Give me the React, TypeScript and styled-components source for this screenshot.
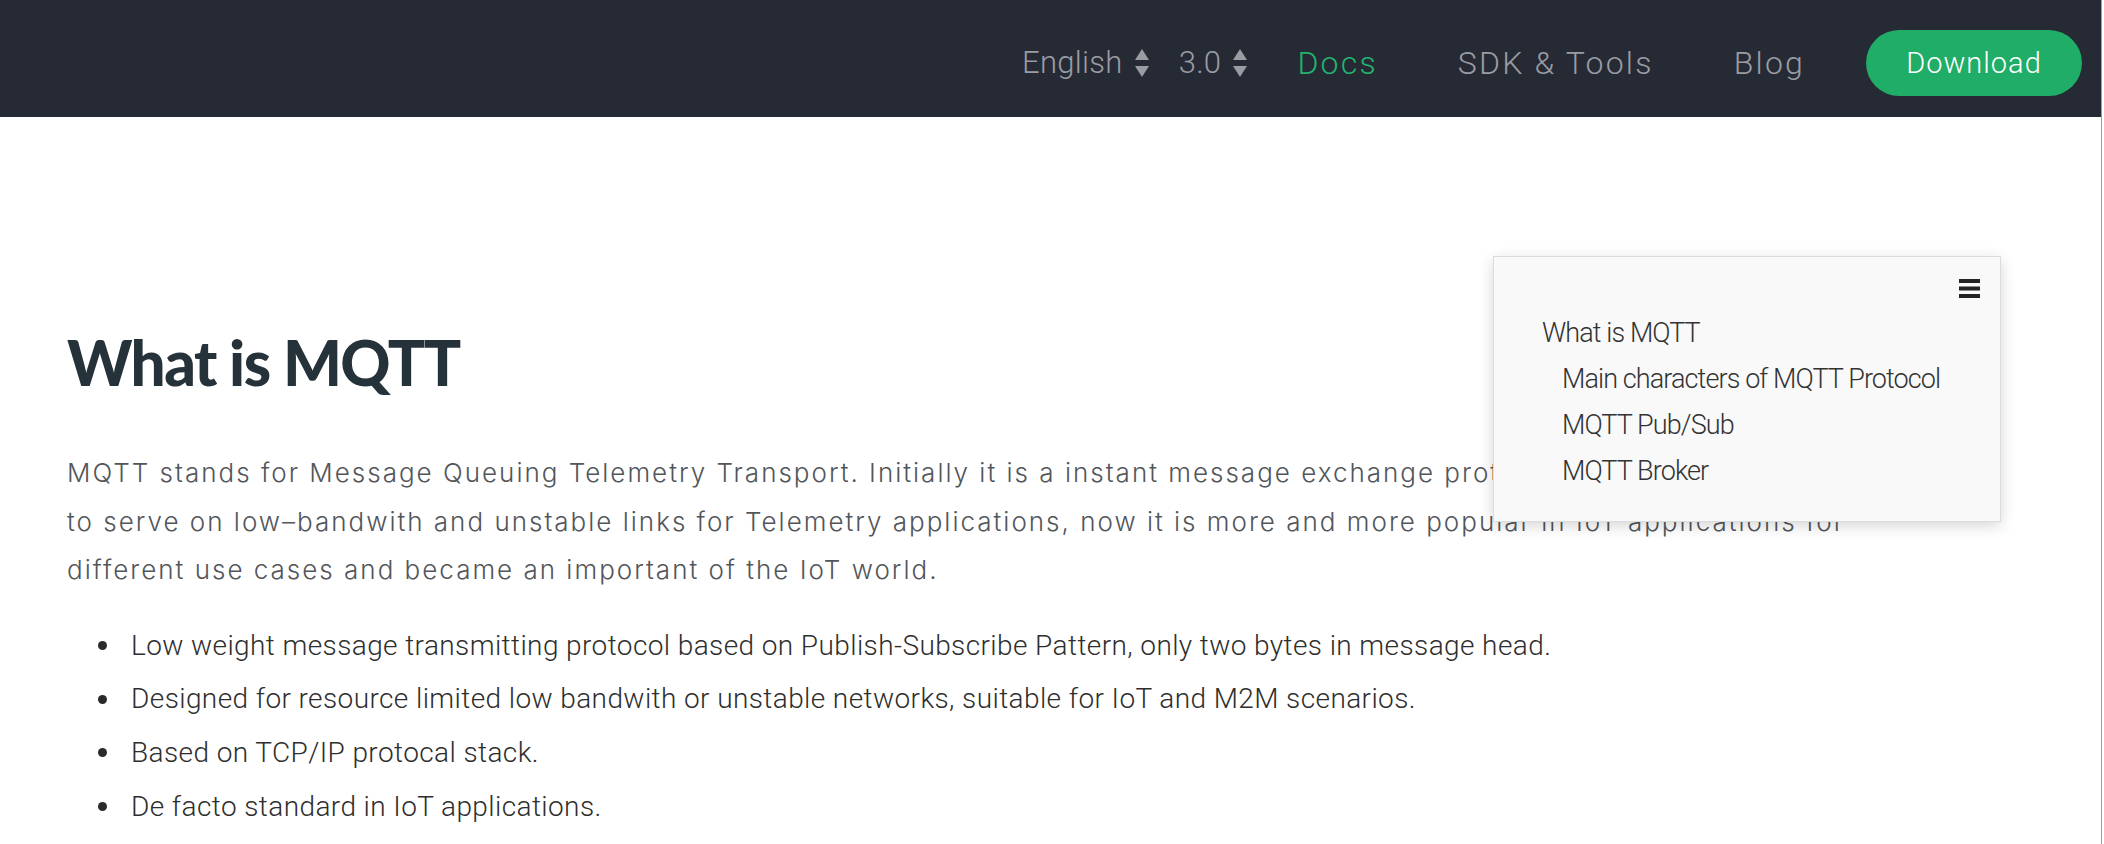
import React from "react";
import styled, { createGlobalStyle } from "styled-components";

const GlobalStyle = createGlobalStyle`
  html, body { margin: 0; padding: 0; background: #ffffff; }
  body { font-family: Roboto, "Liberation Sans", sans-serif; overflow: hidden; }
  * { box-sizing: border-box; }
`;

const Page = styled.div`
  position: relative;
  width: 2102px;
  min-height: 844px;
  border-right: 1px solid #9c9c9c;
  background: #ffffff;
`;

const NavBar = styled.header`
  height: 117px;
  background: #262a35;
  display: flex;
  align-items: center;
  justify-content: flex-end;
  padding: 8px 19px 0 0;
`;

const Selector = styled.div<{ $gap: number }>`
  display: flex;
  align-items: center;
  gap: 12px;
  margin-right: ${(p) => p.$gap}px;
  color: #9a9ca2;
  font-family: Roboto, sans-serif;
  font-weight: 300;
  font-size: 31px;
  letter-spacing: 0.3px;
`;

const NavLink = styled.a<{ $active?: boolean }>`
  color: ${(p) => (p.$active ? "#22b46e" : "#9a9ca2")};
  font-family: Roboto, sans-serif;
  font-weight: 300;
  font-size: 32px;
  letter-spacing: 2.2px;
  text-decoration: none;
  margin-right: 80px;
  &:last-of-type { margin-right: 61px; }
`;

const DownloadButton = styled.button`
  width: 216px;
  height: 66px;
  border-radius: 33px;
  border: none;
  background: #1fad68;
  color: #ffffff;
  font-family: Roboto, sans-serif;
  font-weight: 300;
  font-size: 29px;
  letter-spacing: 1px;
  display: flex;
  align-items: center;
  justify-content: center;
`;

const Main = styled.main`
  padding: 0 0 0 67px;
  width: 1860px;
`;

const Title = styled.h1`
  margin: 0;
  padding-top: 204px;
  font-family: Lato, Inter, sans-serif;
  font-weight: 900;
  font-size: 62px;
  line-height: 82px;
  letter-spacing: -1.5px;
  color: #263239;
`;

const Paragraph = styled.p`
  margin: 46px 0 0 0;
  font-family: Inter, "Noto Sans", sans-serif;
  font-weight: 300;
  font-size: 26px;
  line-height: 48.5px;
  letter-spacing: 2px;
  color: #52565b;
`;

const List = styled.ul`
  list-style: none;
  margin: 24px 0 0 0;
  padding: 0;
`;

const Item = styled.li`
  display: flex;
  align-items: center;
  font-family: Roboto, sans-serif;
  font-weight: 300;
  font-size: 28px;
  letter-spacing: 0.4px;
  line-height: 53.7px;
  color: #2e2e2e;
  &::before {
    content: "";
    flex: none;
    width: 9px;
    height: 9px;
    border-radius: 50%;
    background: #2a2a2a;
    margin: 0 24px 0 31px;
  }
`;

const Toc = styled.nav`
  position: absolute;
  top: 256px;
  left: 1493px;
  width: 508px;
  height: 266px;
  background: #f9f9f9;
  border: 1px solid #dcdcdc;
  box-shadow: 0 4px 14px rgba(0, 0, 0, 0.16);
  padding: 22px 20px 0 48px;
  display: flex;
  flex-direction: column;
`;

const TocHeader = styled.div`
  display: flex;
  justify-content: flex-end;
  height: 31px;
`;

const TocLink = styled.a<{ $level: number }>`
  display: block;
  padding-left: ${(p) => (p.$level - 1) * 20}px;
  font-family: Roboto, sans-serif;
  font-weight: 300;
  font-size: 27px;
  letter-spacing: -0.9px;
  line-height: 46px;
  color: #333333;
  text-decoration: none;
`;

const Arrows = () => (
  <svg width="14" height="28" viewBox="0 0 14 28" aria-hidden>
    <polygon points="7,0 14,11 0,11" fill="#9a9ca2" />
    <polygon points="0,17 14,17 7,28" fill="#9a9ca2" />
  </svg>
);

const Hamburger = () => (
  <svg width="21" height="19" viewBox="0 0 21 19" aria-hidden>
    <rect x="0" y="0" width="21" height="4" fill="#232323" />
    <rect x="0" y="7.5" width="21" height="4" fill="#232323" />
    <rect x="0" y="15" width="21" height="4" fill="#232323" />
  </svg>
);

const bullets = [
  "Low weight message transmitting protocol based on Publish-Subscribe Pattern, only two bytes in message head.",
  "Designed for resource limited low bandwith or unstable networks, suitable for IoT and M2M scenarios.",
  "Based on TCP/IP protocal stack.",
  "De facto standard in IoT applications.",
];

const tocItems: { label: string; level: number }[] = [
  { label: "What is MQTT", level: 1 },
  { label: "Main characters of MQTT Protocol", level: 2 },
  { label: "MQTT Pub/Sub", level: 2 },
  { label: "MQTT Broker", level: 2 },
];

export default function App() {
  return (
    <>
      <GlobalStyle />
      <Page>
        <NavBar>
          <Selector $gap={30}>
            <span>English</span>
            <Arrows />
          </Selector>
          <Selector $gap={50}>
            <span>3.0</span>
            <Arrows />
          </Selector>
          <NavLink $active>Docs</NavLink>
          <NavLink>SDK &amp; Tools</NavLink>
          <NavLink>Blog</NavLink>
          <DownloadButton>Download</DownloadButton>
        </NavBar>
        <Main>
          <Title>What is MQTT</Title>
          <Paragraph>
            MQTT stands for Message Queuing Telemetry Transport. Initially it is a instant message exchange protocol
            designed
            <br />
            to serve on low–bandwith and unstable links for Telemetry applications, now it is more and more popular in
            IoT applications for different use cases and became an important of the IoT world.
          </Paragraph>
          <List>
            {bullets.map((b) => (
              <Item key={b}>{b}</Item>
            ))}
          </List>
        </Main>
        <Toc>
          <TocHeader>
            <Hamburger />
          </TocHeader>
          {tocItems.map((t) => (
            <TocLink key={t.label} $level={t.level}>
              {t.label}
            </TocLink>
          ))}
        </Toc>
      </Page>
    </>
  );
}
